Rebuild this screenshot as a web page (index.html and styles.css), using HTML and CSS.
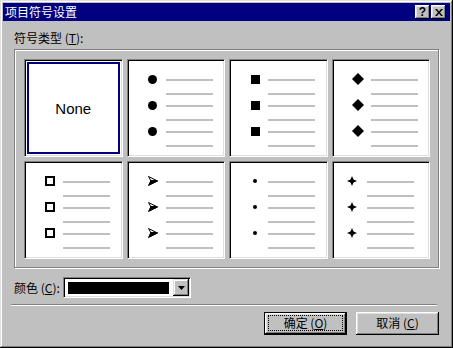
FILE: index.html
```html
<!DOCTYPE html>
<html lang="zh-CN">
<head>
  <meta charset="UTF-8" />
  <title>项目符号设置</title>
  <link rel="stylesheet" href="styles.css">
</head>
<body>
  <div class="window">
    <div class="titlebar">
      <span class="title">项目符号设置</span>
      <div class="caption-btns">
        <span class="cap-btn help">?</span>
        <span class="cap-btn close">
          <svg width="8" height="7" viewBox="0 0 8 7"><path d="M0 0h2l2 2.5 2-2.5h2l-3 3.5 3 3.5h-2l-2-2.5-2 2.5h-2l3-3.5z"/></svg>
        </span>
      </div>
    </div>

    <div class="client">
      <div class="label">符号类型 (<u>T</u>):</div>

      <div class="group">
        <div class="grid">
          <div class="tile">
            <div class="sel">None</div>
          </div>

          <div class="tile list">
            <div class="item"><span class="mark"><i class="disc"></i></span><span class="lines"><b></b><b></b></span></div>
            <div class="item"><span class="mark"><i class="disc"></i></span><span class="lines"><b></b><b></b></span></div>
            <div class="item"><span class="mark"><i class="disc"></i></span><span class="lines"><b></b><b></b></span></div>
          </div>

          <div class="tile list">
            <div class="item"><span class="mark"><i class="square"></i></span><span class="lines"><b></b><b></b></span></div>
            <div class="item"><span class="mark"><i class="square"></i></span><span class="lines"><b></b><b></b></span></div>
            <div class="item"><span class="mark"><i class="square"></i></span><span class="lines"><b></b><b></b></span></div>
          </div>

          <div class="tile list">
            <div class="item"><span class="mark"><svg width="12" height="12"><polygon points="6,0 12,6 6,12 0,6"/></svg></span><span class="lines"><b></b><b></b></span></div>
            <div class="item"><span class="mark"><svg width="12" height="12"><polygon points="6,0 12,6 6,12 0,6"/></svg></span><span class="lines"><b></b><b></b></span></div>
            <div class="item"><span class="mark"><svg width="12" height="12"><polygon points="6,0 12,6 6,12 0,6"/></svg></span><span class="lines"><b></b><b></b></span></div>
          </div>

          <div class="tile list">
            <div class="item"><span class="mark"><i class="hollow"></i></span><span class="lines"><b></b><b></b></span></div>
            <div class="item"><span class="mark"><i class="hollow"></i></span><span class="lines"><b></b><b></b></span></div>
            <div class="item"><span class="mark"><i class="hollow"></i></span><span class="lines"><b></b><b></b></span></div>
          </div>

          <div class="tile list">
            <div class="item"><span class="mark"><svg width="10" height="10"><path d="M0.5 0.5L9.5 5 0.5 9.5 3 5z" fill="none" stroke="#000"/><path d="M2.5 4h7v1.5L0.5 9.5z"/></svg></span><span class="lines"><b></b><b></b></span></div>
            <div class="item"><span class="mark"><svg width="10" height="10"><path d="M0.5 0.5L9.5 5 0.5 9.5 3 5z" fill="none" stroke="#000"/><path d="M2.5 4h7v1.5L0.5 9.5z"/></svg></span><span class="lines"><b></b><b></b></span></div>
            <div class="item"><span class="mark"><svg width="10" height="10"><path d="M0.5 0.5L9.5 5 0.5 9.5 3 5z" fill="none" stroke="#000"/><path d="M2.5 4h7v1.5L0.5 9.5z"/></svg></span><span class="lines"><b></b><b></b></span></div>
          </div>

          <div class="tile list">
            <div class="item"><span class="mark"><i class="dot"></i></span><span class="lines"><b></b><b></b></span></div>
            <div class="item"><span class="mark"><i class="dot"></i></span><span class="lines"><b></b><b></b></span></div>
            <div class="item"><span class="mark"><i class="dot"></i></span><span class="lines"><b></b><b></b></span></div>
          </div>

          <div class="tile list star">
            <div class="item"><span class="mark"><svg width="10" height="10"><polygon points="5,0 6.5,3.5 10,5 6.5,6.5 5,10 3.5,6.5 0,5 3.5,3.5"/><rect x="3.5" y="3.5" width="3" height="3"/></svg></span><span class="lines"><b></b><b></b></span></div>
            <div class="item"><span class="mark"><svg width="10" height="10"><polygon points="5,0 6.5,3.5 10,5 6.5,6.5 5,10 3.5,6.5 0,5 3.5,3.5"/><rect x="3.5" y="3.5" width="3" height="3"/></svg></span><span class="lines"><b></b><b></b></span></div>
            <div class="item"><span class="mark"><svg width="10" height="10"><polygon points="5,0 6.5,3.5 10,5 6.5,6.5 5,10 3.5,6.5 0,5 3.5,3.5"/><rect x="3.5" y="3.5" width="3" height="3"/></svg></span><span class="lines"><b></b><b></b></span></div>
          </div>
        </div>
      </div>

      <div class="color-row">
        <span class="color-label">颜色 (<u>C</u>):</span>
        <div class="combo">
          <span class="swatch"></span>
          <span class="drop"><svg width="7" height="4"><polygon points="0,0 7,0 3.5,4"/></svg></span>
        </div>
      </div>

      <div class="separator"></div>

      <div class="buttons">
        <button class="btn default"><span class="focus">确定 (<u>O</u>)</span></button>
        <button class="btn"><span class="focus plain">取消 (<u>C</u>)</span></button>
      </div>
    </div>
  </div>
</body>
</html>
```

FILE: styles.css
```css
* {
  box-sizing: border-box;
}
body {
  margin: 0;
  background: #c0c0c0;
  font-family: "Noto Sans CJK SC", sans-serif;
  font-size: 12px;
  color: #000;
}
u {
  text-decoration: underline;
}
.window {
  width: 453px;
  height: 348px;
  padding: 3px;
  background: #c0c0c0;
  box-shadow: inset -1px -1px #000, inset 1px 1px #dfdfdf, inset -2px -2px #808080, inset 2px 2px #fff;
}
.titlebar {
  height: 18px;
  background: #000080;
  color: #fff;
  display: flex;
  align-items: center;
  justify-content: space-between;
  padding: 0 4px 0 2px;
}
.title {
  line-height: 14px;
}
.caption-btns {
  display: flex;
  gap: 1px;
}
.cap-btn {
  width: 15px;
  height: 14px;
  background: #c0c0c0;
  color: #000;
  display: flex;
  align-items: center;
  justify-content: center;
  box-shadow: inset -1px -1px #000, inset 1px 1px #fff, inset -2px -2px #808080, inset 2px 2px #dfdfdf;
}
.help {
  font-family: "Liberation Sans", sans-serif;
  font-weight: bold;
  font-size: 12px;
  line-height: 12px;
}
.client {
  padding: 0 11px;
}
.label {
  margin-top: 10px;
  line-height: 14px;
}
.group {
  margin-top: 4px;
  height: 219px;
  border: 1px solid #808080;
  box-shadow: inset 1px 1px #fff, 1px 1px #fff;
  padding: 9px 8px 8px 9px;
}
.grid {
  display: grid;
  grid-template-columns: repeat(4, 1fr);
  grid-template-rows: 98px 98px;
  gap: 4px;
}
.tile {
  background: #fff;
  border: 1px solid;
  border-color: #808080 #fff #fff #808080;
  box-shadow: inset 1px 1px #000, inset -1px -1px #dfdfdf;
}
.sel {
  margin: 2px;
  height: calc(100% - 4px);
  border: 2px solid #000080;
  display: flex;
  align-items: center;
  justify-content: center;
  font-family: "Liberation Sans", Arial, sans-serif;
  font-size: 15px;
}
.list {
  padding-top: 19px;
}
.item {
  display: flex;
  align-items: flex-start;
  margin-bottom: 10px;
}
.mark {
  width: 20px;
  height: 10px;
  margin: -5px 0 0 15px;
  display: flex;
  align-items: center;
  justify-content: center;
}
.lines {
  width: 47px;
  margin-left: 3px;
}
.lines b {
  display: block;
  height: 2px;
  background: #c0c0c0;
}
.lines b + b {
  margin-top: 12px;
}
.star .mark {
  margin-left: 9px;
}
.star .lines {
  margin-left: 5px;
}
.disc {
  width: 9px;
  height: 9px;
  border-radius: 50%;
  background: #000;
}
.square {
  width: 9px;
  height: 9px;
  background: #000;
}
.hollow {
  width: 10px;
  height: 10px;
  border: 2px solid #000;
}
.dot {
  width: 4px;
  height: 4px;
  border-radius: 50%;
  background: #000;
}
.color-row {
  margin-top: 9px;
  display: flex;
  align-items: center;
  height: 21px;
}
.color-label {
  width: 49px;
}
.combo {
  width: 128px;
  height: 21px;
  background: #fff;
  border: 1px solid;
  border-color: #808080 #fff #fff #808080;
  box-shadow: inset 1px 1px #000, inset -1px -1px #dfdfdf;
  padding: 1px;
  display: flex;
  align-items: flex-start;
}
.swatch {
  width: 101px;
  height: 12px;
  margin: 3px 4px 0 3px;
  background: #000;
}
.drop {
  width: 16px;
  height: 17px;
  background: #c0c0c0;
  display: flex;
  align-items: center;
  justify-content: center;
  box-shadow: inset -1px -1px #000, inset 1px 1px #dfdfdf, inset -2px -2px #808080, inset 2px 2px #fff;
}
.separator {
  margin: 6px 2px 0 -3px;
  height: 2px;
  border-top: 1px solid #808080;
  border-bottom: 1px solid #fff;
}
.buttons {
  margin-top: 6px;
  display: flex;
  justify-content: flex-end;
  gap: 9px;
}
.btn {
  width: 83px;
  height: 23px;
  padding: 3px 4px 4px;
  border: none;
  background: #c0c0c0;
  font-family: "Noto Sans CJK SC", sans-serif;
  font-size: 12px;
  color: #000;
  display: flex;
  box-shadow: inset -1px -1px #000, inset 1px 1px #fff, inset -2px -2px #808080, inset 2px 2px #dfdfdf;
}
.btn.default {
  border: 1px solid #000;
  padding: 2px 3px 3px;
}
.focus {
  flex: 1;
  display: flex;
  align-items: center;
  justify-content: center;
  border: 1px dotted #000;
  line-height: 14px;
}
.focus.plain {
  border-color: transparent;
}
```
